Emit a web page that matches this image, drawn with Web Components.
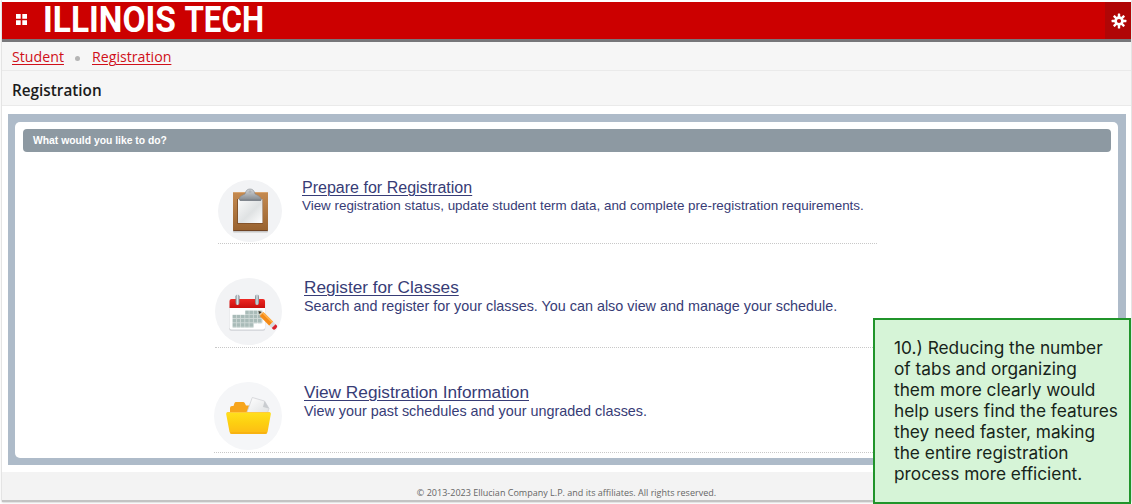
<!DOCTYPE html>
<html lang="en">
<head>
<meta charset="utf-8">
<title>Registration</title>
<style>
html,body{margin:0;height:100%;overflow:hidden;background:#fff}
</style>
</head>
<body>
<registration-page></registration-page>
<script>
const define = (name, html) => {
  const t = document.createElement('template');
  t.innerHTML = html;
  customElements.define(name, class extends HTMLElement {
    constructor() {
      super();
      this.attachShadow({mode: 'open'}).appendChild(t.content.cloneNode(true));
    }
  });
};

define('app-header', `
<style>
:host{display:flex;height:37px;background:#c00;border-bottom:3px solid #77777a;align-items:stretch}
.grid{width:11px;height:11px;display:grid;grid-template-columns:4.700px 4.700px;grid-template-rows:4.700px 4.700px;gap:1.600px;margin:12px 0 0 14px}
.grid i{background:#fff;border-radius:.5px}
.logo{margin-left:15px;display:block;overflow:visible}
.gear{margin-left:auto;width:26px;background:#b00606;display:flex;align-items:center;justify-content:center}
.gear svg{margin-left:2px}
</style>
<svg class="grid" viewBox="0 0 11 11" fill="#fff"><path d="M0 0h4.700v4.700H0zM6.300 0H11v4.700H6.300zM0 6.300h4.700V11H0zM6.300 6.300H11V11H6.300z"/></svg>
<svg class="logo" width="226" height="37" viewBox="0 0 226 37"><g transform="scale(1 1.17)" font-family="Roboto, sans-serif" font-weight="700" font-size="32" fill="#fff"><text x="1" y="25.9" textLength="133" lengthAdjust="spacingAndGlyphs">ILLINOIS</text><text x="142.500" y="25.9" textLength="79.500" lengthAdjust="spacingAndGlyphs">TECH</text></g></svg>
<div class="gear"><svg width="16" height="16" viewBox="-8 -8 16 16"><g fill="#fff"><rect x="-1.2" y="-7.4" width="2.400" height="14.8" rx=".5"/><rect x="-1.2" y="-7.4" width="2.400" height="14.8" rx=".5" transform="rotate(45)"/><rect x="-1.2" y="-7.4" width="2.400" height="14.8" rx=".5" transform="rotate(90)"/><rect x="-1.2" y="-7.4" width="2.400" height="14.8" rx=".5" transform="rotate(135)"/><circle r="4.700"/></g><circle r="2.1" fill="#b00606"/></svg></div>
`);

define('crumb-bar', `
<style>
:host{display:flex;height:28px;align-items:center;padding-left:10px;background:#f6f6f6;border-bottom:1px solid #eaeaea;font:14.2px/20px "Open Sans",sans-serif;color:#d0101a}
a{text-decoration:underline;text-underline-offset:2px;text-decoration-thickness:1px;white-space:nowrap;padding-top:2px}
.a{width:52px}
i{width:5px;height:5px;border-radius:50%;background:#b5b5b5;margin:5px 12px 0 11px}
</style>
<a class="a">Student</a><i></i><a>Registration</a>
`);

define('page-title', `
<style>
:host{display:flex;height:34px;box-sizing:content-box;align-items:center;padding-left:10px;background:#f6f6f6;border-bottom:1px solid #eaeaea;font:600 15.3px/20px "Open Sans",sans-serif;color:#1b1b1b}
span{padding-top:4px}
</style>
<span><slot></slot></span>
`);

define('task-panel', `
<style>
:host{display:block;box-sizing:border-box;width:1118px;height:351px;margin:8px 0 0 6px;background:#aebbc9;padding:8px 8px 7px 7px}
.in{background:#fff;border-radius:5px;height:336px;padding:7px 7px 0 8px;box-sizing:border-box}
h2{margin:0;height:23px;border-radius:4px;background:#8d99a2;color:#fff;font:bold 10.35px/23px "Liberation Sans",Arial,sans-serif;padding-left:10px}
</style>
<div class="in"><h2>What would you like to do?</h2><slot></slot></div>
`);

define('task-row', `
<style>
:host{display:flex;box-sizing:border-box;border-bottom:1px dotted #c8c8c8;font-family:"Liberation Sans",Arial,sans-serif;color:#373c76;white-space:nowrap}
.ic{width:var(--d);height:var(--h,var(--d));border-radius:50%;background:var(--bg,#f2f3f5);display:block;flex:none}
.tx{margin-left:var(--gap);margin-top:var(--tp)}
a{display:block;font-size:var(--f1);line-height:19px;text-decoration:underline;text-underline-offset:2px;text-decoration-thickness:1px}
p{margin:0;font-size:var(--f2);line-height:18px}
</style>
<div class="ic"><slot name="icon"></slot></div>
<div class="tx"><a><slot name="title"></slot></a><p><slot></slot></p></div>
`);

define('icon-clipboard', `
<style>:host,svg{display:block}</style>
<svg width="64" height="62" viewBox="218 180 64 62">
<defs><linearGradient id="w" x2="0" y2="1"><stop stop-color="#c58a50"/><stop offset="1" stop-color="#98622f"/></linearGradient><linearGradient id="p" x2="1" y2="1"><stop stop-color="#fafafa"/><stop offset=".55" stop-color="#dfe2e3"/><stop offset="1" stop-color="#fff"/></linearGradient><linearGradient id="m" x2="0" y2="1"><stop stop-color="#d3d6d9"/><stop offset="1" stop-color="#858b91"/></linearGradient></defs>
<rect x="233" y="193" width="35" height="39.6" rx="1" fill="#999" opacity=".5"/>
<rect x="233" y="192" width="35" height="39" rx="1" fill="url(#w)"/><path d="M233.5 230.5h34" stroke="#704526"/>
<path d="M234 192.5h33" stroke="#d9a570"/>
<rect x="237" y="199" width="26" height="25" fill="#84542b"/><rect x="238" y="199" width="24.5" height="24" fill="url(#p)"/>
<path d="M239 200q0-3 3-4.500l3-1.500q1-5 5-5t5 5l3 1.500q3 1.500 3.500 4.500z" fill="url(#m)" stroke="#858a90" stroke-width=".6"/>
<circle cx="250" cy="191.800" r="1.500" fill="#aeb2b6"/><path d="M240 200.300h21" stroke="#6d747c"/>
</svg>`);

define('icon-calendar', `
<style>:host,svg{display:block}</style>
<svg width="67" height="67" viewBox="215 278 67 67">
<defs><linearGradient id="r" x2="0" y2="1"><stop stop-color="#ee2823"/><stop offset="1" stop-color="#c9100e"/></linearGradient><linearGradient id="s"><stop stop-color="#77848c"/><stop offset=".5" stop-color="#dce2e5"/><stop offset="1" stop-color="#77848c"/></linearGradient>
<pattern id="g" x="232.500" y="310.500" width="4.250" height="4.250" patternUnits="userSpaceOnUse"><rect width="3.400" height="3.400" fill="#a9bbb8"/></pattern></defs>
<rect x="229.200" y="300" width="36" height="30.700" rx="2" fill="#d0d2d6"/>
<rect x="229.500" y="299" width="35.500" height="30.500" rx="2" fill="#fff"/>
<path d="M229.500 308v-7q0-2 2-2h31.500q2 0 2 2v7z" fill="url(#r)"/>
<path d="M245.250 310.500h17v12.750h-8.500v4.250h-21.250v-12.750h12.750z" fill="#d0dad8"/><path d="M245.250 310.500h17v12.750h-8.500v4.250h-21.250v-12.750h12.750z" fill="url(#g)"/>
<rect x="235.500" y="294.500" width="4" height="10.500" rx="2" fill="url(#s)"/><rect x="255" y="294.500" width="4" height="10.500" rx="2" fill="url(#s)"/>
<g transform="translate(258.500 311) rotate(45)"><path d="M0 0l5-2.700v5.400z" fill="#e9c79a"/><path d="M0 0l2.800-1.500v3z" fill="#2d2b28"/><path d="M4.500-2.700H18v5.400H4.500z" fill="#f68b16"/><path d="M4.500-2.700H18v1.800H4.500z" fill="#ffb04a"/><path d="M18-2.700h3.500v5.400H18z" fill="#d9dde0"/><path d="M21.500-2.700h1.700q1.600 0 1.600 2.700t-1.600 2.700h-1.700z" fill="#d9202c"/></g>
</svg>`);

define('icon-folder', `
<style>:host,svg{display:block}</style>
<svg width="68" height="68" viewBox="214 382 68 68">
<defs><linearGradient id="f" x2="0" y2="1"><stop stop-color="#ffe11c"/><stop offset=".5" stop-color="#fdcf11"/><stop offset="1" stop-color="#fdbb15"/></linearGradient><linearGradient id="q" x2="1" y2="1"><stop stop-color="#fff"/><stop offset="1" stop-color="#dfe1e3"/></linearGradient></defs>
<path d="M230 414v-6q0-2 2-2h1.500l1-3q.4-1 1.500-1h7q1.200 0 1.700 1l1.300 2.500h4v8.500z" fill="#f7a51c"/>
<path d="M247 412l5.300-14.500 12.200 3.500 4.500 7.500-1.500 4.500h-20z" fill="url(#q)" stroke="#d0d2d5" stroke-width=".8"/><path d="M264.500 401l-1.500 6 6 1.500z" fill="#c9ccd0"/>
<path d="M228 412h41q2.200 0 1.800 2.200l-3.200 17.600q-.4 2.200-2.300 2.200h-33.500q-1.900 0-2.300-2.200l-3.300-17.600q-.3-2.200 1.800-2.200z" fill="url(#f)"/>
<path d="M227.500 412.500h42" stroke="#ffcb3a"/><path d="M230.500 433h36" stroke="#f3a90e"/>
</svg>`);

define('page-footer', `
<style>
:host{display:block;height:28px;margin-top:7px;background:#f3f3f3;border-bottom:2px solid #c3c3c3;text-align:center;font:9.03px/12px "Open Sans",sans-serif;color:#666}
span{display:block;padding:15px 0 0;width:1129px}
</style><span><slot></slot></span>`);

define('review-note', `
<style>
:host{position:absolute;left:873px;top:318px;box-sizing:border-box;width:258px;height:186px;background:#d6f4d7;border:2px solid #20942a;padding:17px 0 0 19px;font:17.3px/21px Inter,sans-serif;color:#17241a;white-space:nowrap}
</style><slot></slot>`);

define('registration-page', `
<style>
:host{display:block;position:relative;width:1132px;height:504px;background:#fff;overflow:hidden}
main{margin-left:2px;padding-top:2px;width:1129px;box-sizing:border-box;box-shadow:0 0 2px #aaa;height:502px}
.r1{margin:28px 0 0 195px;width:659px;height:64px;--d:64px;--h:62px;--gap:20px;--tp:-2px;--f1:16.05px;--f2:13.4px}
.r2{margin:34px 0 0 192px;width:662px;height:70px;--d:67px;--gap:22px;--tp:0px;--f1:17.2px;--f2:14.37px}
.r3{margin:34px 0 0 191px;width:663px;height:71px;--d:68px;--gap:22px;--tp:1px;--bg:#f5f6f8;--f1:17.25px;--f2:14.36px}
</style>
<main>
<app-header></app-header>
<crumb-bar></crumb-bar>
<page-title>Registration</page-title>
<task-panel>
<task-row class="r1"><icon-clipboard slot="icon"></icon-clipboard><span slot="title">Prepare for Registration</span>View registration status, update student term data, and complete pre-registration requirements.</task-row>
<task-row class="r2"><icon-calendar slot="icon"></icon-calendar><span slot="title">Register for Classes</span>Search and register for your classes. You can also view and manage your schedule.</task-row>
<task-row class="r3"><icon-folder slot="icon"></icon-folder><span slot="title">View Registration Information</span>View your past schedules and your ungraded classes.</task-row>
</task-panel>
<page-footer>© 2013-2023 Ellucian Company L.P. and its affiliates. All rights reserved.</page-footer>
</main>
<review-note>10.) Reducing the number<br>of tabs and organizing<br>them more clearly would<br>help users find the features<br>they need faster, making<br>the entire registration<br>process more efficient.</review-note>
`);
</script>
</body>
</html>
